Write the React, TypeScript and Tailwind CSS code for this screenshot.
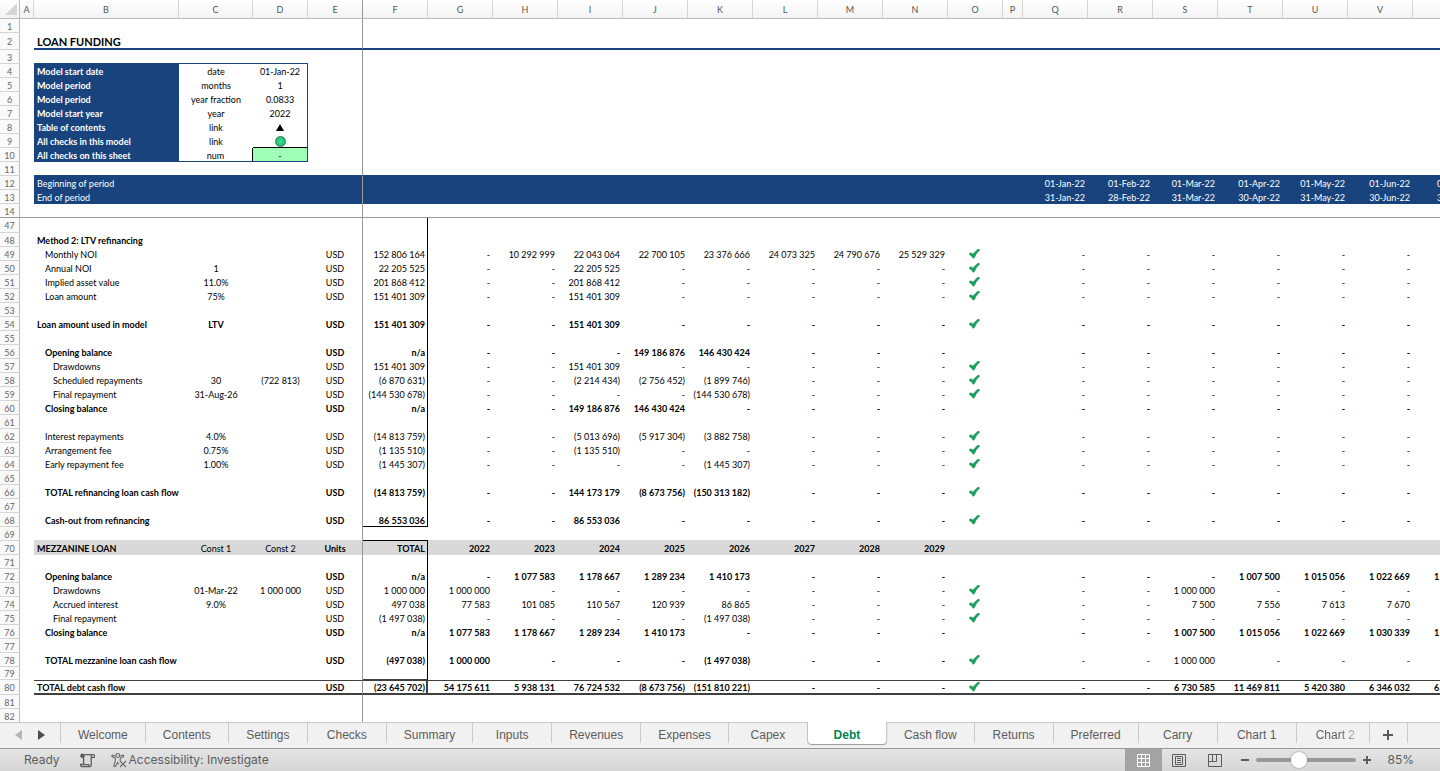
import React from "react";
import clsx from "clsx";

type Row = {
  n: number;
  label?: string;
  indent?: number;
  bold?: boolean;
  c?: string;
  d?: string;
  unit?: string;
  // columns F to N
  years?: string[];
  check?: boolean;
  // columns Q to W
  months?: string[];
  lightMonths?: boolean;
};

const columns = [
  { id: "A", w: "w-[14px]" },
  { id: "B", w: "w-[145px]" },
  { id: "C", w: "w-[74px]" },
  { id: "D", w: "w-[55px]" },
  { id: "E", w: "w-[55px]" },
  { id: "F", w: "w-[65px]" },
  { id: "G", w: "w-[65px]" },
  { id: "H", w: "w-[65px]" },
  { id: "I", w: "w-[65px]" },
  { id: "J", w: "w-[65px]" },
  { id: "K", w: "w-[65px]" },
  { id: "L", w: "w-[65px]" },
  { id: "M", w: "w-[65px]" },
  { id: "N", w: "w-[65px]" },
  { id: "O", w: "w-[55px]" },
  { id: "P", w: "w-[20px]" },
  { id: "Q", w: "w-[65px]" },
  { id: "R", w: "w-[65px]" },
  { id: "S", w: "w-[65px]" },
  { id: "T", w: "w-[65px]" },
  { id: "U", w: "w-[65px]" },
  { id: "V", w: "w-[65px]" },
  { id: "W", w: "w-[65px]" },
  { id: "X", w: "" },
];

const YEARS = "FGHIJKLMN";
const MONTHS = "QRSTUVW";
const none = ["-", "-", "-", "-", "-", "-", "-"];

const rows: Row[] = [
  { n: 1 },
  { n: 2, label: "LOAN FUNDING", bold: true },
  { n: 3 },
  { n: 4, label: "Model start date", c: "date", d: "01-Jan-22" },
  { n: 5, label: "Model period", c: "months", d: "1" },
  { n: 6, label: "Model period", c: "year fraction", d: "0.0833" },
  { n: 7, label: "Model start year", c: "year", d: "2022" },
  { n: 8, label: "Table of contents", c: "link", d: "up" },
  { n: 9, label: "All checks in this model", c: "link", d: "ok" },
  { n: 10, label: "All checks on this sheet", c: "num", d: "-" },
  { n: 11 },
  {
    n: 12,
    label: "Beginning of period",
    months: ["01-Jan-22", "01-Feb-22", "01-Mar-22", "01-Apr-22", "01-May-22", "01-Jun-22", "01-Jul-22"],
  },
  {
    n: 13,
    label: "End of period",
    months: ["31-Jan-22", "28-Feb-22", "31-Mar-22", "30-Apr-22", "31-May-22", "30-Jun-22", "31-Jul-22"],
  },
  { n: 14 },
  { n: 47 },
  { n: 48, label: "Method 2: LTV refinancing", bold: true },
  {
    n: 49, label: "Monthly NOI", indent: 1, unit: "USD", check: true, months: none,
    years: ["152 806 164", "-", "10 292 999", "22 043 064", "22 700 105", "23 376 666", "24 073 325", "24 790 676", "25 529 329"],
  },
  {
    n: 50, label: "Annual NOI", indent: 1, c: "1", unit: "USD", check: true, months: none,
    years: ["22 205 525", "-", "-", "22 205 525", "-", "-", "-", "-", "-"],
  },
  {
    n: 51, label: "Implied asset value", indent: 1, c: "11.0%", unit: "USD", check: true, months: none,
    years: ["201 868 412", "-", "-", "201 868 412", "-", "-", "-", "-", "-"],
  },
  {
    n: 52, label: "Loan amount", indent: 1, c: "75%", unit: "USD", check: true, months: none,
    years: ["151 401 309", "-", "-", "151 401 309", "-", "-", "-", "-", "-"],
  },
  { n: 53 },
  {
    n: 54, label: "Loan amount used in model", bold: true, c: "LTV", unit: "USD", check: true, months: none,
    years: ["151 401 309", "-", "-", "151 401 309", "-", "-", "-", "-", "-"],
  },
  { n: 55 },
  {
    n: 56, label: "Opening balance", indent: 1, bold: true, unit: "USD", months: none,
    years: ["n/a", "-", "-", "-", "149 186 876", "146 430 424", "-", "-", "-"],
  },
  {
    n: 57, label: "Drawdowns", indent: 2, unit: "USD", check: true, months: none,
    years: ["151 401 309", "-", "-", "151 401 309", "-", "-", "-", "-", "-"],
  },
  {
    n: 58, label: "Scheduled repayments", indent: 2, c: "30", d: "(722 813)", unit: "USD", check: true, months: none,
    years: ["(6 870 631)", "-", "-", "(2 214 434)", "(2 756 452)", "(1 899 746)", "-", "-", "-"],
  },
  {
    n: 59, label: "Final repayment", indent: 2, c: "31-Aug-26", unit: "USD", check: true, months: none,
    years: ["(144 530 678)", "-", "-", "-", "-", "(144 530 678)", "-", "-", "-"],
  },
  {
    n: 60, label: "Closing balance", indent: 1, bold: true, unit: "USD", months: none,
    years: ["n/a", "-", "-", "149 186 876", "146 430 424", "-", "-", "-", "-"],
  },
  { n: 61 },
  {
    n: 62, label: "Interest repayments", indent: 1, c: "4.0%", unit: "USD", check: true, months: none,
    years: ["(14 813 759)", "-", "-", "(5 013 696)", "(5 917 304)", "(3 882 758)", "-", "-", "-"],
  },
  {
    n: 63, label: "Arrangement fee", indent: 1, c: "0.75%", unit: "USD", check: true, months: none,
    years: ["(1 135 510)", "-", "-", "(1 135 510)", "-", "-", "-", "-", "-"],
  },
  {
    n: 64, label: "Early repayment fee", indent: 1, c: "1.00%", unit: "USD", check: true, months: none,
    years: ["(1 445 307)", "-", "-", "-", "-", "(1 445 307)", "-", "-", "-"],
  },
  { n: 65 },
  {
    n: 66, label: "TOTAL refinancing loan cash flow", indent: 1, bold: true, unit: "USD", check: true, months: none,
    years: ["(14 813 759)", "-", "-", "144 173 179", "(8 673 756)", "(150 313 182)", "-", "-", "-"],
  },
  { n: 67 },
  {
    n: 68, label: "Cash-out from refinancing", indent: 1, bold: true, unit: "USD", check: true, months: none,
    years: ["86 553 036", "-", "-", "86 553 036", "-", "-", "-", "-", "-"],
  },
  { n: 69 },
  {
    n: 70, label: "MEZZANINE LOAN", bold: true, c: "Const 1", d: "Const 2", unit: "Units",
    years: ["TOTAL", "2022", "2023", "2024", "2025", "2026", "2027", "2028", "2029"],
  },
  { n: 71 },
  {
    n: 72, label: "Opening balance", indent: 1, bold: true, unit: "USD",
    years: ["n/a", "-", "1 077 583", "1 178 667", "1 289 234", "1 410 173", "-", "-", "-"],
    months: ["-", "-", "-", "1 007 500", "1 015 056", "1 022 669", "1 030 339"],
  },
  {
    n: 73, label: "Drawdowns", indent: 2, c: "01-Mar-22", d: "1 000 000", unit: "USD", check: true,
    years: ["1 000 000", "1 000 000", "-", "-", "-", "-", "-", "-", "-"],
    months: ["-", "-", "1 000 000", "-", "-", "-", "-"],
  },
  {
    n: 74, label: "Accrued interest", indent: 2, c: "9.0%", unit: "USD", check: true,
    years: ["497 038", "77 583", "101 085", "110 567", "120 939", "86 865", "-", "-", "-"],
    months: ["-", "-", "7 500", "7 556", "7 613", "7 670", "7 728"],
  },
  {
    n: 75, label: "Final repayment", indent: 2, unit: "USD", check: true, months: none,
    years: ["(1 497 038)", "-", "-", "-", "-", "(1 497 038)", "-", "-", "-"],
  },
  {
    n: 76, label: "Closing balance", indent: 1, bold: true, unit: "USD",
    years: ["n/a", "1 077 583", "1 178 667", "1 289 234", "1 410 173", "-", "-", "-", "-"],
    months: ["-", "-", "1 007 500", "1 015 056", "1 022 669", "1 030 339", "1 038 067"],
  },
  { n: 77 },
  {
    n: 78, label: "TOTAL mezzanine loan cash flow", indent: 1, bold: true, unit: "USD", check: true, lightMonths: true,
    years: ["(497 038)", "1 000 000", "-", "-", "-", "(1 497 038)", "-", "-", "-"],
    months: ["-", "-", "1 000 000", "-", "-", "-", "-"],
  },
  { n: 79 },
  {
    n: 80, label: "TOTAL debt cash flow", bold: true, unit: "USD", check: true,
    years: ["(23 645 702)", "54 175 611", "5 938 131", "76 724 532", "(8 673 756)", "(151 810 221)", "-", "-", "-"],
    months: ["-", "-", "6 730 585", "11 469 811", "5 420 380", "6 346 032", "6 352 118"],
  },
  { n: 81 },
  { n: 82 },
];

const tabs = [
  "Welcome", "Contents", "Settings", "Checks", "Summary", "Inputs", "Revenues", "Expenses",
  "Capex", "Debt", "Cash flow", "Returns", "Preferred", "Carry", "Chart 1", "Chart 2",
];

const Check = () => (
  <svg width="11" height="10" viewBox="0 0 12 11" className="mx-auto block" aria-label="OK">
    <path
      d="M.5 4.8 2.2 4l2 1.600L7.800 1.800 9.600.4l1.800-.1.200 1.400-1.500 1L7.600 6 6.100 9.400l-1.800.9L3 8 .8 6.600z"
      fill="#0fa55a"
      stroke="#3f7f58"
      strokeWidth=".5"
    />
  </svg>
);

const rowHeight = (n: number) => {
  if (n === 2) return "h-[17px]";
  if (n === 47 || n === 80) return "h-[15px]";
  if (n === 79) return "h-[13px]";
  return "h-[14px]";
};

const content = (r: Row, col: string): React.ReactNode => {
  if (col === "B") return r.label;
  if (col === "C") return r.c;
  if (col === "D") {
    if (r.d === "up")
      return (
        <svg width="8" height="7" viewBox="0 0 8 7" className="mx-auto block" aria-label="Up">
          <path d="M4 0 8 7H0z" />
        </svg>
      );
    if (r.d === "ok")
      return (
        <span className="block mx-auto size-[11px] rounded-full border border-[#2f7d55] bg-radial from-[#3edc8f] to-[#0fb566]" />
      );
    return r.d;
  }
  if (col === "E") return r.unit;
  if (col === "O") return r.check && <Check />;
  if (YEARS.includes(col)) return r.years?.[YEARS.indexOf(col)];
  if (MONTHS.includes(col)) return r.months?.[MONTHS.indexOf(col)];
  return null;
};

const cellClass = (r: Row, col: string) => {
  const { n } = r;
  const inSheet = col !== "A";
  const box = n >= 4 && n <= 10;
  const isMonth = MONTHS.includes(col);
  const isNumber = YEARS.includes(col) || isMonth;
  const bold = (r.bold && !(r.lightMonths && isMonth)) || (box && col === "B");
  return clsx(
    "p-0 whitespace-nowrap border-solid",
    bold && !(n === 70 && (col === "C" || col === "D")) ? "font-bold" : "font-normal",
    isNumber ? "text-right" : col === "B" ? "text-left" : "text-center",
    isNumber && (col === "F" ? "pr-[2px]" : "pr-[3px]"),
    col === "B" && (r.indent === 2 ? "pl-[19px]" : r.indent === 1 ? "pl-[11px]" : "pl-[3px]"),
    col === "O" && "pr-[2px]",
    n === 2 && col === "B" && "text-[11px] pt-px",
    // freeze panes
    col === "E" && "border-r border-r-[#999]",
    n === 14 && "border-b border-b-[#999]",
    // title rule and parameter box
    n === 2 && inSheet && "border-b-2 border-b-[#18437c]",
    (n === 3 || n === 10) && "BCD".includes(col) && "border-b border-b-[#18437c]",
    n === 10 && "pt-px",
    box && col === "B" && "bg-[#18437c] text-white",
    box && col === "D" && "border-r border-r-[#18437c]",
    n === 9 && col === "D" && "border-b border-b-black pt-px",
    n === 10 && col === "C" && "border-r border-r-black",
    n === 10 && col === "D" && "bg-[#9fffb9]",
    // timeline
    n === 11 && inSheet && "border-b border-b-[#18437c]",
    (n === 12 || n === 13) && inSheet && "bg-[#18437c] text-white",
    // total column frame
    col === "F" && n >= 47 && n <= 79 && n !== 69 && "border-r border-r-black",
    col === "F" && (n === 68 || n === 69) && "border-b border-b-black pt-px",
    n === 69 && inSheet && col !== "F" && "border-b border-b-[#d9d9d9]",
    n === 70 && inSheet && "bg-[#d9d9d9]",
    // grand total
    n === 79 && col === "F" && "border-b border-b-[#404040]",
    n === 80 && inSheet && "border-t border-t-[#404040] border-b-2 border-b-[#404040]",
    n === 80 && col === "F" && "border-r-2 border-r-[#404040] !pr-px"
  );
};

const Sheet = () => (
  <table className="table-fixed border-separate border-spacing-0 w-full min-w-[1543px] text-[9px] leading-[11px] text-black">
    <colgroup>
      <col className="w-[20px]" />
      {columns.map((c) => (
        <col key={c.id} className={c.w} />
      ))}
    </colgroup>
    <thead>
      <tr className="h-[19px] text-[#555] bg-linear-to-b from-white to-[#f3f3f3]">
        <td className="p-0 border-r border-b border-[#bbb]">
          <svg width="12" height="12" viewBox="0 0 12 12" className="ml-[5px] block" aria-hidden="true">
            <path d="M12 0v12H0z" fill="#d6d6d6" />
          </svg>
        </td>
        {columns.map((c) => (
          <th
            key={c.id}
            scope="col"
            className={clsx(
              "p-0 font-normal text-center border-r border-b border-b-[#bbb]",
              c.id === "E" ? "border-r-[#999]" : "border-r-[#d4d4d4]"
            )}
          >
            {c.id}
          </th>
        ))}
      </tr>
    </thead>
    <tbody>
      {rows.map((r) => (
        <tr key={r.n} className={rowHeight(r.n)}>
          <th
            scope="row"
            className={clsx(
              "p-0 pt-px font-normal text-center text-[#666] bg-[#fafafa] border-r border-b border-r-[#bbb]",
              r.n === 14 ? "border-b-[#999]" : "border-b-[#d4d4d4]"
            )}
          >
            {r.n}
          </th>
          {columns.map((c) => (
            <td key={c.id} className={cellClass(r, c.id)}>
              {content(r, c.id)}
            </td>
          ))}
        </tr>
      ))}
    </tbody>
  </table>
);

const Tabs = () => (
  <nav className="flex h-[26px] shrink-0 bg-[#f1f1f1] text-[12px] leading-4 text-[#5c5c5c] font-['Liberation_Sans',sans-serif]">
    <div className="flex items-center w-[61px] h-[21px] pt-1 pl-[15px] gap-4 border-t border-r border-[#c8c8c8]">
      <button aria-label="Previous sheet">
        <svg width="7" height="10" viewBox="0 0 7 10" fill="#b5b5b5"><path d="M7 0v10L0 5z" /></svg>
      </button>
      <button aria-label="Next sheet">
        <svg width="7" height="10" viewBox="0 0 7 10" fill="#4d4d4d"><path d="M0 0v10l7-5z" /></svg>
      </button>
    </div>
    {tabs.map((t) => (
      <button
        key={t}
        className={clsx(
          "min-w-[79px] px-[17px] pt-1 border-r border-[#c8c8c8] whitespace-nowrap overflow-hidden",
          t === "Debt"
            ? "h-[22px] bg-white text-[#00864f] font-bold rounded-b-sm shadow-[0_1px_1px_#999]"
            : "h-[21px] border-t",
          t === "Chart 2" &&
            "!min-w-0 w-[73px] !pl-[19px] !pr-0 text-left bg-linear-to-r from-[#5c5c5c] from-60% to-[#c4c4c4] to-85% bg-clip-text text-transparent"
        )}
      >
        {t}
      </button>
    ))}
    <button aria-label="New sheet" className="flex items-center justify-center w-[38px] h-[21px] pt-1 border-t border-r border-[#c8c8c8]">
      <svg width="10" height="10" viewBox="0 0 10 10" stroke="#5c5c5c" strokeWidth="2"><path d="M5 0v10M0 5h10" /></svg>
    </button>
    <div className="flex-1 h-[21px] border-t border-[#c8c8c8]" />
  </nav>
);

const StatusBar = () => (
  <footer className="flex items-stretch h-[23px] shrink-0 border-t border-[#999] bg-linear-to-b from-[#e4e4e4] to-[#d6d6d6] text-[12px] text-[#5c5c5c] font-[Inter,sans-serif]">
    <span className="flex items-center pl-6">Ready</span>
    <button aria-label="Record macro" className="flex items-center ml-5">
      <svg width="15" height="15" viewBox="0 0 15 15" fill="none" stroke="#5c5c5c" strokeWidth="1.3">
        <circle cx="2.600" cy="2.800" r="2.400" fill="#5c5c5c" stroke="none" />
        <path d="M5 1.700h8.500q1 0 1 1.200v1.400h-3M11.200 2v10.200q0 1.300-1.300 1.300M3.600 5v6.500H.7v.8q0 1.300 1.300 1.300h8M3.600 11.700h5.200v1.200" />
      </svg>
    </button>
    <button className="flex items-center gap-[2px] ml-4">
      <svg width="16" height="15" viewBox="0 0 16 15" fill="none" stroke="#666" strokeWidth="1.1">
        <circle cx="6.700" cy="2.400" r="1.900" />
        <path d="M4.800 3.400 2 2.200Q.9 2 .8 3q0 .6.8 1l2.700 1.300v2.900l-1.500 4.300q0 1.100.9 1.200.8 0 1-.8L6.700 9.500l1 1.600M8.600 3.400l2.800-1.200q1.200-.2 1.300.8 0 .6-.8 1L9.200 5.300V8M9 8l6 6M15 8l-6 6" />
      </svg>
      Accessibility: Investigate
    </button>
    <div className="flex items-stretch ml-auto pr-[26px]">
      <button aria-label="Normal view" className="flex items-center justify-center w-[37px] bg-[#a3a3a3]">
        <svg width="13" height="13" viewBox="0 0 13 13" fill="none" stroke="#fff">
          <path d="M.5.5h12v12H.5zM4.500.5v12M8.500.5v12M.5 4.500h12M.5 8.500h12" />
        </svg>
      </button>
      <button aria-label="Page layout" className="flex items-center ml-[10px]">
        <svg width="14" height="13" viewBox="0 0 14 13" fill="none" stroke="#5c5c5c">
          <path d="M.5.5h13v12H.5zM3.500 2.500h7v8h-7zM5 4.500h4M5 6.500h4M5 8.500h4" />
        </svg>
      </button>
      <button aria-label="Page break preview" className="flex items-center ml-[22px]">
        <svg width="14" height="13" viewBox="0 0 14 13" fill="none" stroke="#5c5c5c">
          <path d="M.5.5h13v12H.5zM.5 7.500h8v-7M4.500.5v7" />
        </svg>
      </button>
      <button aria-label="Zoom out" className="flex items-center ml-[19px]">
        <svg width="8" height="8" viewBox="0 0 8 8" stroke="#5c5c5c" strokeWidth="2"><path d="M0 4h8" /></svg>
      </button>
      <input
        type="range"
        aria-label="Zoom"
        min={0}
        max={100}
        defaultValue={42}
        className="appearance-none self-center mx-[7px] w-[100px] h-1 rounded-full bg-[#999] [&::-webkit-slider-thumb]:appearance-none [&::-webkit-slider-thumb]:size-4 [&::-webkit-slider-thumb]:rounded-full [&::-webkit-slider-thumb]:bg-white [&::-webkit-slider-thumb]:shadow-[0_0_2px_#777]"
      />
      <button aria-label="Zoom in" className="flex items-center">
        <svg width="8" height="8" viewBox="0 0 8 8" stroke="#5c5c5c" strokeWidth="2"><path d="M0 4h8M4 0v8" /></svg>
      </button>
      <span className="flex items-center justify-end w-[43px]">85%</span>
    </div>
  </footer>
);

const App = () => {
  return (
    <div className="flex flex-col h-screen overflow-hidden bg-white font-[Lato,sans-serif]">
      <main className="flex-1 min-h-0 overflow-hidden">
        <Sheet />
      </main>
      <Tabs />
      <StatusBar />
    </div>
  );
};

export default App;
